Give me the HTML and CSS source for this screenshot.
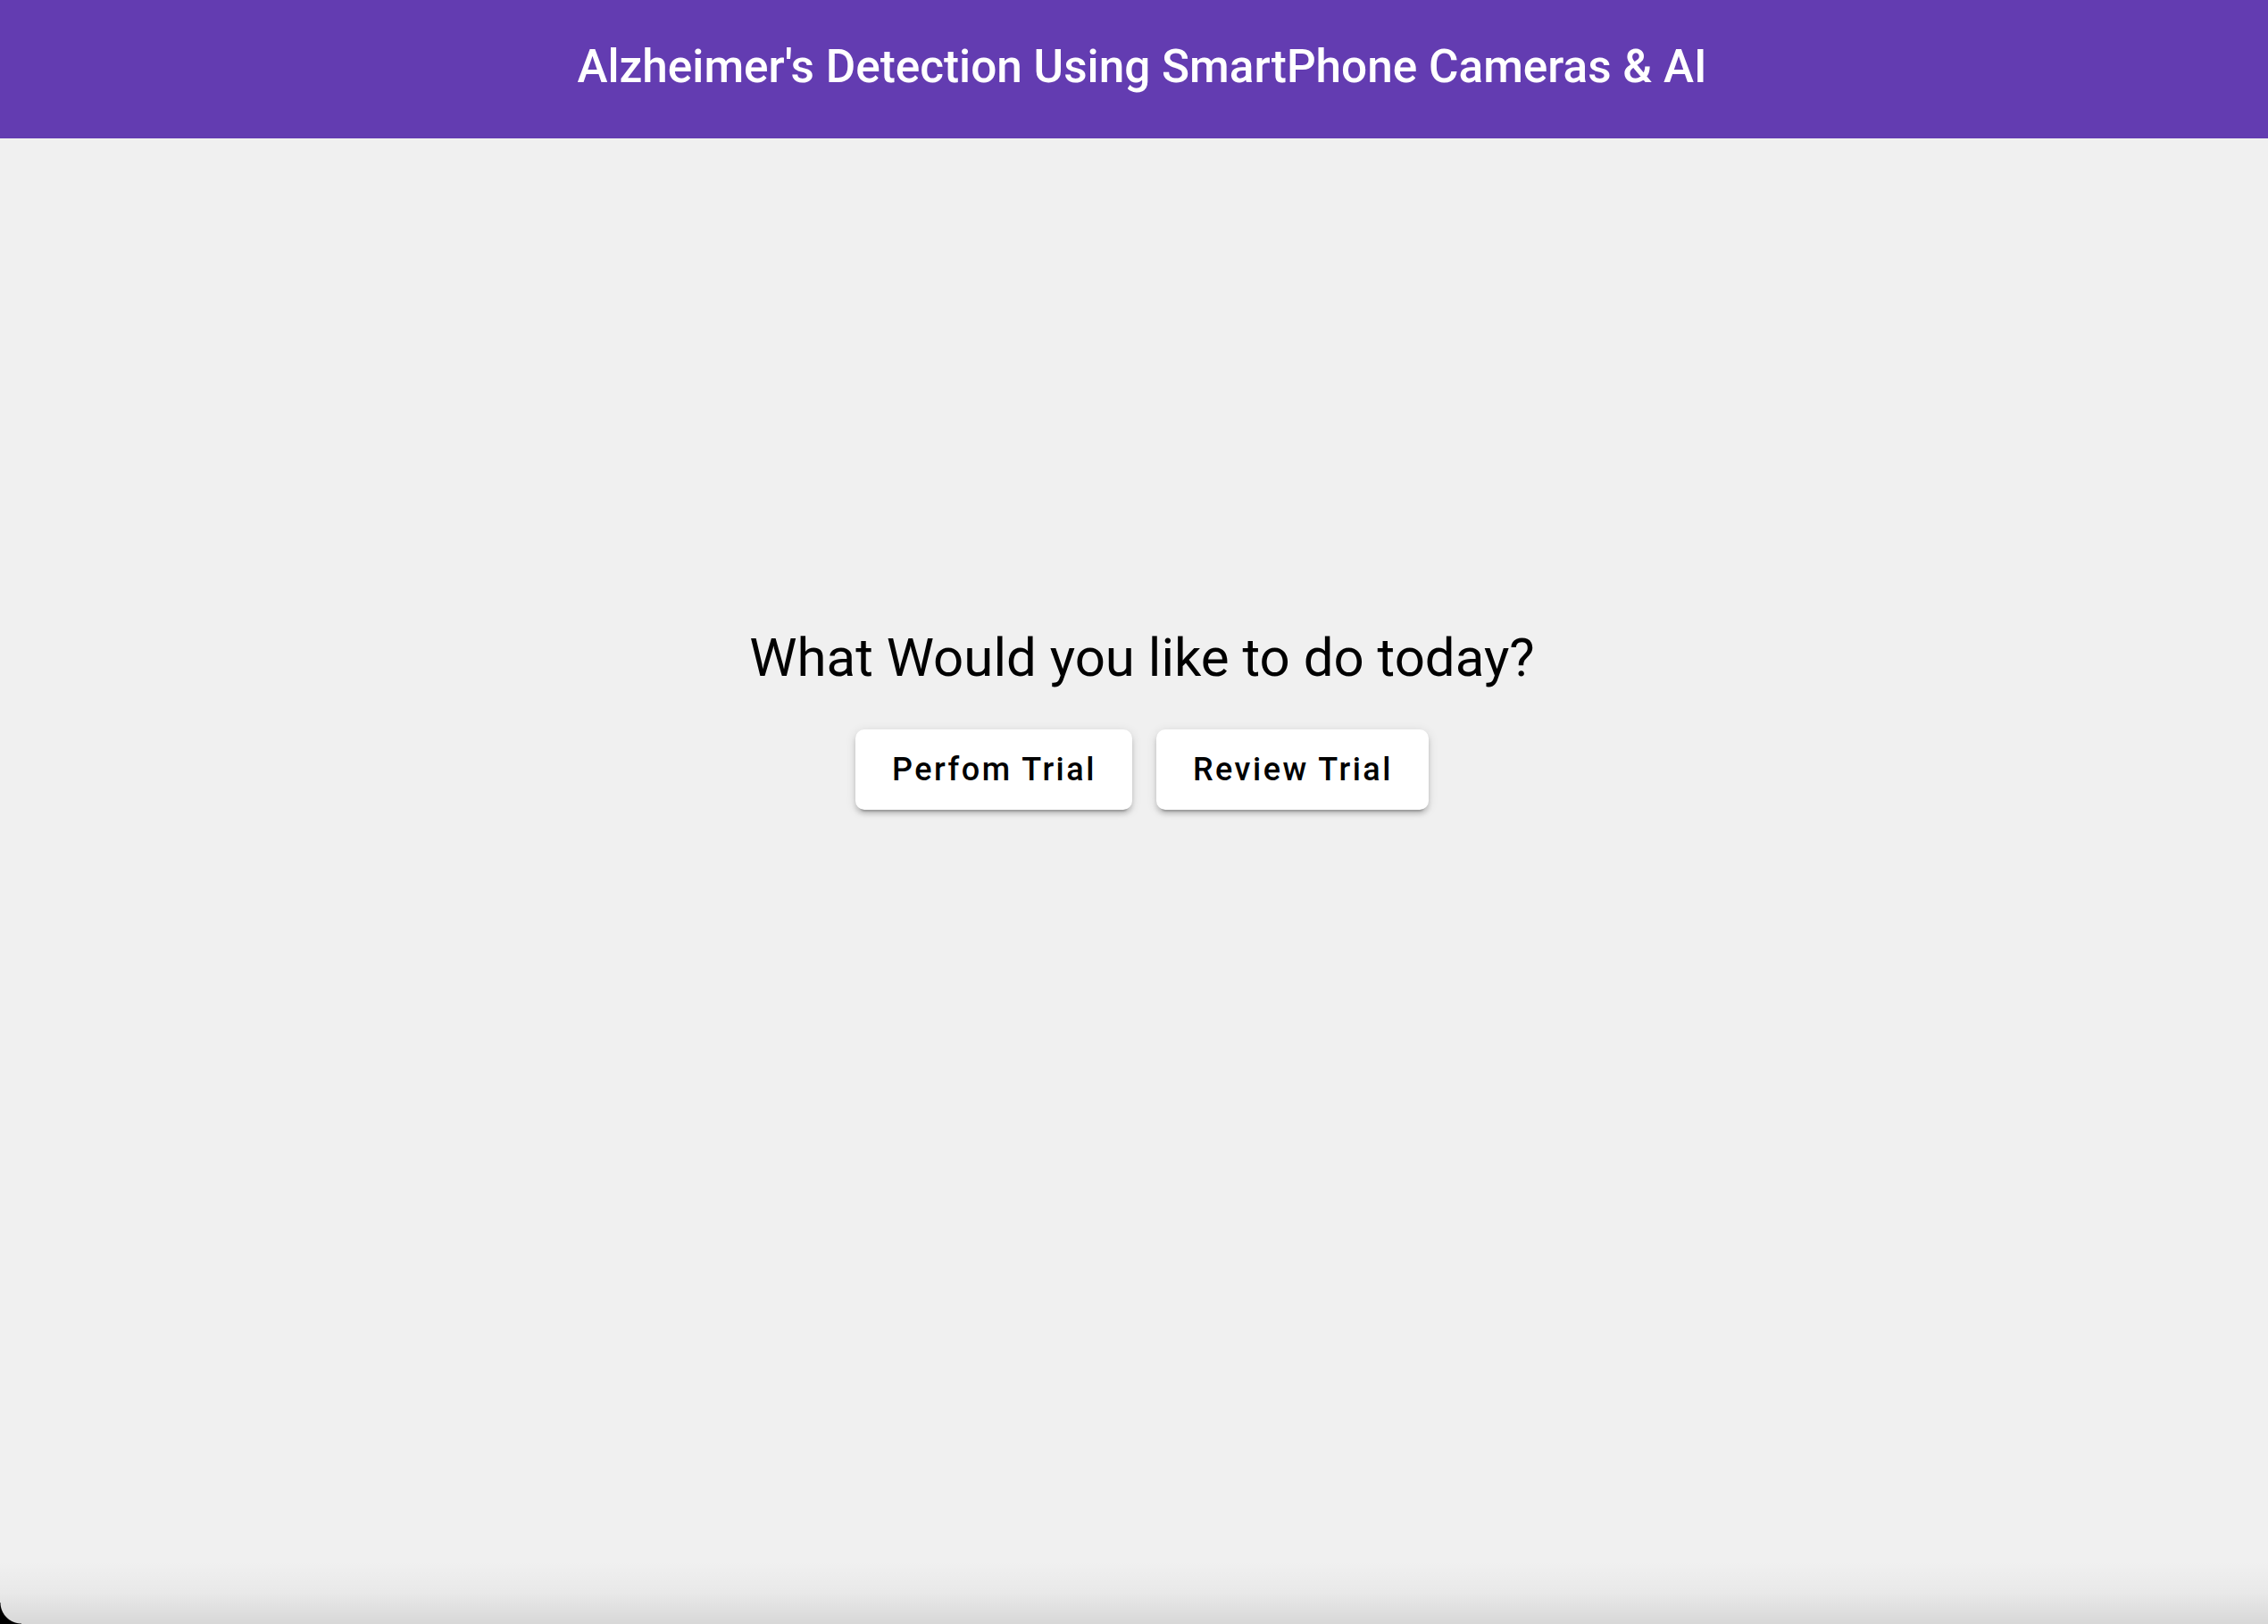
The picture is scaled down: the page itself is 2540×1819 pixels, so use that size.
FILE: index.html
```html
<!DOCTYPE html>
<html lang="en">
<head>
<meta charset="utf-8">
<title>Alzheimer's Detection</title>
<link rel="stylesheet" href="styles.css">
</head>
<body>
<div class="window">
  <header class="toolbar">
    <span class="toolbar-title">Alzheimer's Detection Using SmartPhone Cameras &amp; AI</span>
  </header>
  <main class="content">
    <h1 class="question">What Would you like to do today?</h1>
    <div class="actions">
      <button class="btn">Perfom Trial</button>
      <button class="btn">Review Trial</button>
    </div>
  </main>
  <div class="bottom-shade"></div>
  <div class="corner"></div>
</div>
</body>
</html>
```
FILE: styles.css
```css
html, body {
  margin: 0;
  padding: 0;
  height: 100%;
}
body {
  background: #f0f0f0;
  font-family: Roboto, "Noto Sans", "Liberation Sans", sans-serif;
  overflow: hidden;
}
.window {
  position: relative;
  height: 100%;
  display: flex;
  flex-direction: column;
}
.toolbar {
  height: 155px;
  flex: none;
  background: #633cb1;
  color: #ffffff;
  display: flex;
  align-items: center;
  justify-content: center;
  padding-left: 18px;
  box-sizing: border-box;
}
.toolbar-title {
  font-size: 51.3px;
  font-weight: 500;
  line-height: 1;
  position: relative;
  top: -3px;
}
.content {
  flex: 1;
  display: flex;
  flex-direction: column;
  align-items: center;
  padding-top: 545px;
  padding-left: 18px;
}
.question {
  margin: 0;
  font-size: 60px;
  font-weight: 400;
  line-height: 74px;
  color: #000000;
}
.actions {
  display: flex;
  gap: 27px;
  margin-top: 43px;
}
.btn {
  height: 90px;
  padding: 0 40px 0 41px;
  border: none;
  border-radius: 10px;
  background: #ffffff;
  color: #000000;
  font-family: Roboto, "Noto Sans", "Liberation Sans", sans-serif;
  font-size: 36px;
  font-weight: 500;
  letter-spacing: 2.5px;
  box-shadow: 0 7px 2px -5px rgba(0,0,0,.2), 0 5px 5px 0 rgba(0,0,0,.14), 0 2px 12px 0 rgba(0,0,0,.12);
  cursor: pointer;
}
.bottom-shade {
  position: absolute;
  left: 0;
  right: 0;
  bottom: 0;
  height: 70px;
  background: linear-gradient(to bottom, rgba(0,0,0,0) 0%, rgba(0,0,0,0.03) 50%, rgba(0,0,0,0.1) 100%);
  pointer-events: none;
}
.corner {
  position: absolute;
  left: 0;
  bottom: 0;
  width: 24px;
  height: 24px;
  background: radial-gradient(circle at 100% 0%, transparent 23px, #000000 24px);
}
```
